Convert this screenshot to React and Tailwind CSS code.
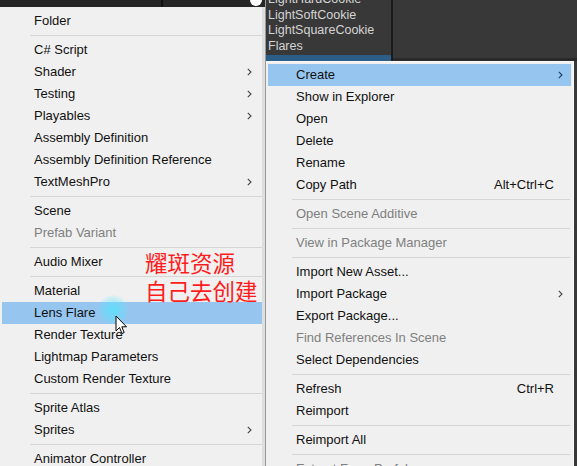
import React from 'react';

const leftItems = [
    { label: 'Folder' },
    { sep: true },
    { label: 'C# Script' },
    { label: 'Shader', arrow: true },
    { label: 'Testing', arrow: true },
    { label: 'Playables', arrow: true },
    { label: 'Assembly Definition' },
    { label: 'Assembly Definition Reference' },
    { label: 'TextMeshPro', arrow: true },
    { sep: true },
    { label: 'Scene' },
    { label: 'Prefab Variant', disabled: true },
    { sep: true },
    { label: 'Audio Mixer' },
    { sep: true },
    { label: 'Material' },
    { label: 'Lens Flare', active: true },
    { label: 'Render Texture' },
    { label: 'Lightmap Parameters' },
    { label: 'Custom Render Texture' },
    { sep: true },
    { label: 'Sprite Atlas' },
    { label: 'Sprites', arrow: true },
    { sep: true },
    { label: 'Animator Controller' },
];

const rightItems = [
    { label: 'Create', arrow: true, active: true },
    { label: 'Show in Explorer' },
    { label: 'Open' },
    { label: 'Delete' },
    { label: 'Rename' },
    { label: 'Copy Path', shortcut: 'Alt+Ctrl+C' },
    { sep: true },
    { label: 'Open Scene Additive', disabled: true },
    { sep: true },
    { label: 'View in Package Manager', disabled: true },
    { sep: true },
    { label: 'Import New Asset...' },
    { label: 'Import Package', arrow: true },
    { label: 'Export Package...' },
    { label: 'Find References In Scene', disabled: true },
    { label: 'Select Dependencies' },
    { sep: true },
    { label: 'Refresh', shortcut: 'Ctrl+R' },
    { label: 'Reimport' },
    { sep: true },
    { label: 'Reimport All' },
    { sep: true },
    { label: 'Extract From Prefab', disabled: true },
];

function Chevron({ color }) {
    return (
        <svg width="5" height="8" viewBox="0 0 5 8" className="shrink-0">
            <path d="M0.8 0.8 L4 4 L0.8 7.2" fill="none" stroke={color} strokeWidth="1.1" />
        </svg>
    );
}

function MenuItem({ item, textPad, sepPad, rightPad }) {
    if (item.sep) {
        return (
            <div className={`h-[7px] flex items-center ${sepPad}`}>
                <div className="h-px w-full bg-[#d5d5d5]" />
            </div>
        );
    }
    return (
        <div
            className={`h-[22px] flex items-center shrink-0 ${rightPad} ${textPad} ${item.active ? 'bg-[#96c6f0]' : ''} ${item.disabled ? 'text-[#7f7f7f]' : 'text-[#111]'}`}
        >
            <span className="flex-1 whitespace-nowrap">{item.label}</span>
            {item.shortcut && <span className="mr-[9px] whitespace-nowrap">{item.shortcut}</span>}
            {item.arrow && <Chevron color={item.active ? '#1d3b66' : '#444'} />}
        </div>
    );
}

function App() {
    return (
        <div
            className="w-[577px] h-[466px] overflow-hidden flex bg-[#383838] text-[13px] relative"
            style={{ fontFamily: '"Liberation Sans", Arial, sans-serif' }}
        >
            {/* left column */}
            <div className="w-[265px] flex flex-col shrink-0">
                <div className="h-[7px] bg-[#262626] relative shrink-0">
                    <div className="absolute left-[161px] top-0 h-[7px] w-[2px] bg-[#111]" />
                    <div className="absolute left-[250px] top-[-6px] w-[12px] h-[12px] rounded-full bg-white" />
                </div>
                <div className="flex-1 bg-[#f0f0f0] border-r-[3px] border-[#dedede] pt-[3px] pl-[2px]">
                    {leftItems.map((item, i) => (
                        <MenuItem key={i} item={item} textPad="pl-[32px]" sepPad="pl-[28px]" rightPad="pr-[10px]" />
                    ))}
                </div>
            </div>

            {/* right column */}
            <div className="flex-1 flex flex-col border-l border-[#9a9a9a]">
                <div className="h-[61px] shrink-0 flex bg-[#383838]">
                    <div className="w-[127px] flex flex-col text-[12.5px] text-[#d4d4d4] leading-[15.5px] border-r-2 border-[#1c1c1c] overflow-hidden">
                        <div className="-mt-[8px] pl-[2px]">LightHardCookie</div>
                        <div className="pl-[2px]">LightSoftCookie</div>
                        <div className="pl-[2px]">LightSquareCookie</div>
                        <div className="pl-[2px]">Flares</div>
                        <div className="pl-[2px] h-[9px] bg-[#2c5d87] mt-[1px]" />
                    </div>
                    <div className="flex-1 flex flex-col justify-end">
                        <div className="h-[3px] bg-[#2a2a2a]" />
                    </div>
                </div>
                <div className="flex-1 flex">
                    <div className="w-[308px] bg-[#f0f0f0] border-t border-r border-[#fbfbfb] pt-[2px] px-[2px]">
                        {rightItems.map((item, i) => (
                            <MenuItem key={i} item={item} textPad="pl-[28px]" sepPad="pl-[24px] pr-[1px]" rightPad="pr-[8px]" />
                        ))}
                    </div>
                    <div className="flex-1 bg-[#383838]" />
                </div>
            </div>

            {/* click glow + cursor */}
            <div className="absolute left-[98px] top-[295px] w-[30px] h-[30px] rounded-full bg-[radial-gradient(circle,rgba(80,230,255,0.75)_0%,rgba(80,230,255,0.25)_55%,rgba(80,230,255,0)_75%)]" />
            <svg className="absolute left-[115px] top-[315px]" width="13" height="20" viewBox="0 0 13 20">
                <path d="M1 1 L1 16 L4.5 12.5 L7 18.5 L9.2 17.5 L6.8 11.8 L11.5 11.8 Z" fill="#fff" stroke="#000" strokeWidth="1" strokeLinejoin="round" />
            </svg>

            {/* red overlay caption */}
            <div
                className="absolute left-[145px] top-[248px] text-[22.5px] leading-[28px] text-[#ff1c1c]"
                style={{ fontFamily: '"Noto Sans CJK SC", sans-serif' }}
            >
                <div>耀斑资源</div>
                <div>自己去创建</div>
            </div>
        </div>
    );
}

export default App;
